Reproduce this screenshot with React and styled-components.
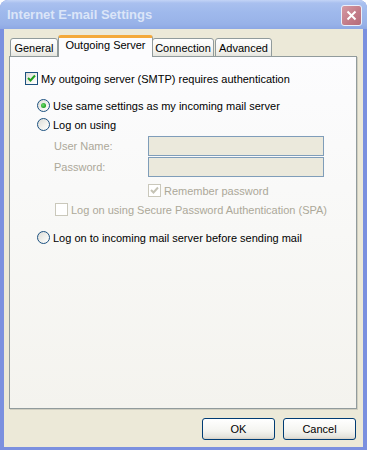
import React from 'react';
import styled, {createGlobalStyle} from 'styled-components';

const Global = createGlobalStyle`
	html, body {
		margin: 0;
		padding: 0;
		background: #fff;
	}
	body {
		font-family: "Liberation Sans", Arial, sans-serif;
		font-size: 11px;
	}
`;

const Window = styled.div`
	width: 367px;
	height: 450px;
	display: flex;
	flex-direction: column;
	background: #7b90df;
	border-radius: 8px 8px 0 0;
	overflow: hidden;
`;

const TitleBar = styled.div`
	height: 29px;
	flex: none;
	display: flex;
	align-items: center;
	justify-content: space-between;
	padding: 0 5px 0 7px;
	background: linear-gradient(#c3d4f6 0, #a9c0ef 3px, #9fb9ec 12px, #98b2e8 24px, #8ea8e4 29px);
`;

const Title = styled.span`
	font-family: "Liberation Sans", Arial, sans-serif;
	font-weight: bold;
	font-size: 13px;
	color: #dbe5f8;
	padding-bottom: 1px;
`;

const CloseButton = styled.div`
	width: 21px;
	height: 21px;
	box-sizing: border-box;
	border: 1px solid #eaf0fb;
	border-radius: 3px;
	background: linear-gradient(135deg, #d59aa3, #c27a87 60%, #b56c7a);
	display: flex;
	align-items: center;
	justify-content: center;
	margin-top: 2px;
`;

const Body = styled.div`
	flex: 1;
	margin: 0 4px 3px 4px;
	background: #ece9d8;
	padding: 7px 6px 0 5px;
	display: flex;
	flex-direction: column;
`;

const TabStrip = styled.div`
	display: flex;
	align-items: flex-end;
	height: 21px;
	padding-left: 1px;
	position: relative;
	z-index: 1;
	margin-bottom: -1px;
`;

const Tab = styled.div`
	box-sizing: border-box;
	width: ${p => p.$w}px;
	height: ${p => (p.$active ? 22 : 19)}px;
	margin: 0 ${p => (p.$active ? -1 : 1)}px 0 ${p => (p.$active ? -1 : 0)}px;
	border: 1px solid #919b9c;
	border-bottom: ${p => (p.$active ? 'none' : '1px solid #919b9c')};
	border-top: ${p => (p.$active ? '3px solid #f4a93b' : '1px solid #919b9c')};
	border-radius: 3px 3px 0 0;
	background: ${p => (p.$active ? '#fcfcfe' : 'linear-gradient(#ffffff, #f3f3ef 70%, #e6e5de)')};
	display: flex;
	justify-content: center;
	padding-top: ${p => (p.$active ? 0 : 2)}px;
	color: #000;
	font-size: 11px;
	line-height: 14px;
	position: relative;
	z-index: ${p => (p.$active ? 2 : 1)};
`;

const Panel = styled.div`
	width: 348px;
	height: 353px;
	box-sizing: border-box;
	border: 1px solid #919b9c;
	box-shadow: 1px 1px 0 #d0cec0;
	background: linear-gradient(#fcfcfe, #f8f8f6 50%, #f4f3ee);
	padding: 15px 0 0 15px;
	display: flex;
	flex-direction: column;
`;

const Row = styled.div`
	display: flex;
	align-items: center;
	height: ${p => p.$h || 14}px;
	margin-top: ${p => p.$mt || 0}px;
	margin-left: ${p => p.$ml || 0}px;
	color: ${p => (p.$disabled ? '#aca899' : '#000')};
	white-space: nowrap;
`;

const Box = styled.span`
	width: 13px;
	height: 13px;
	flex: none;
	box-sizing: border-box;
	border: 1px solid ${p => (p.$disabled ? '#cac8bb' : '#1c5180')};
	background: ${p => (p.$disabled ? '#fff' : 'linear-gradient(135deg, #dcdcd7, #f5f5f2 60%, #fff)')};
	display: flex;
	align-items: center;
	justify-content: center;
	margin-right: 3px;
`;

const Radio = styled.span`
	width: 13px;
	height: 13px;
	flex: none;
	box-sizing: border-box;
	border: 1px solid #1c5180;
	border-radius: 50%;
	background: linear-gradient(135deg, #dcdcd7, #f3f3ef 60%, #fff);
	display: flex;
	align-items: center;
	justify-content: center;
	margin-right: 3px;
`;

const Dot = styled.span`
	width: 5px;
	height: 5px;
	border-radius: 50%;
	background: radial-gradient(circle at 40% 40%, #6fdc6f, #21a121 70%);
`;

const Label = styled.span`
	width: 94px;
	flex: none;
	color: #aca899;
`;

const Field = styled.div`
	width: 176px;
	height: 20px;
	box-sizing: border-box;
	border: 1px solid #7f9db9;
	background: #ebe9dc;
`;

const Footer = styled.div`
	display: flex;
	justify-content: flex-end;
	gap: 8px;
	padding: 9px 1px 0 0;
`;

const Button = styled.button`
	width: 73px;
	height: 22px;
	box-sizing: border-box;
	border: 1px solid #003c74;
	border-radius: 3px;
	background: linear-gradient(#ffffff, #f4f4f0 60%, #e4e3dc 90%, #d6d0c5);
	font-family: "Liberation Sans", Arial, sans-serif;
	font-size: 11px;
	color: #000;
	padding: 0;
`;

const Check = ({color}) => (
	<svg width="9" height="9" viewBox="0 0 9 9">
		<path d="M1 4 L3.5 6.5 L8 1.5" fill="none" stroke={color} strokeWidth="2" />
	</svg>
);

const Checkbox = ({checked, disabled}) => (
	<Box $disabled={disabled}>
		{checked && <Check color={disabled ? '#c5c3b5' : '#21a121'} />}
	</Box>
);

export default function App() {
	return (
		<>
			<Global />
			<Window>
				<TitleBar>
					<Title>Internet E-mail Settings</Title>
					<CloseButton>
						<svg width="11" height="11" viewBox="0 0 11 11">
							<path d="M1.5 1.5 L9.5 9.5 M9.5 1.5 L1.5 9.5" stroke="#fff" strokeWidth="2" />
						</svg>
					</CloseButton>
				</TitleBar>
				<Body>
					<TabStrip>
						<Tab $w={48}>General</Tab>
						<Tab $w={95} $active>Outgoing Server</Tab>
						<Tab $w={62}>Connection</Tab>
						<Tab $w={57}>Advanced</Tab>
					</TabStrip>
					<Panel>
						<Row $h={13}>
							<Checkbox checked />
							My outgoing server (SMTP) requires authentication
						</Row>
						<Row $h={13} $mt={14} $ml={12}>
							<Radio><Dot /></Radio>
							Use same settings as my incoming mail server
						</Row>
						<Row $h={13} $mt={6} $ml={12}>
							<Radio />
							Log on using
						</Row>
						<Row $h={20} $mt={5} $ml={29}>
							<Label>User Name:</Label>
							<Field />
						</Row>
						<Row $h={20} $mt={1} $ml={29}>
							<Label>Password:</Label>
							<Field />
						</Row>
						<Row $h={13} $mt={7} $ml={123} $disabled>
							<Checkbox checked disabled />
							Remember password
						</Row>
						<Row $h={13} $mt={6} $ml={30} $disabled>
							<Checkbox disabled />
							Log on using Secure Password Authentication (SPA)
						</Row>
						<Row $h={13} $mt={15} $ml={12}>
							<Radio />
							Log on to incoming mail server before sending mail
						</Row>
					</Panel>
					<Footer>
						<Button>OK</Button>
						<Button>Cancel</Button>
					</Footer>
				</Body>
			</Window>
		</>
	);
}
